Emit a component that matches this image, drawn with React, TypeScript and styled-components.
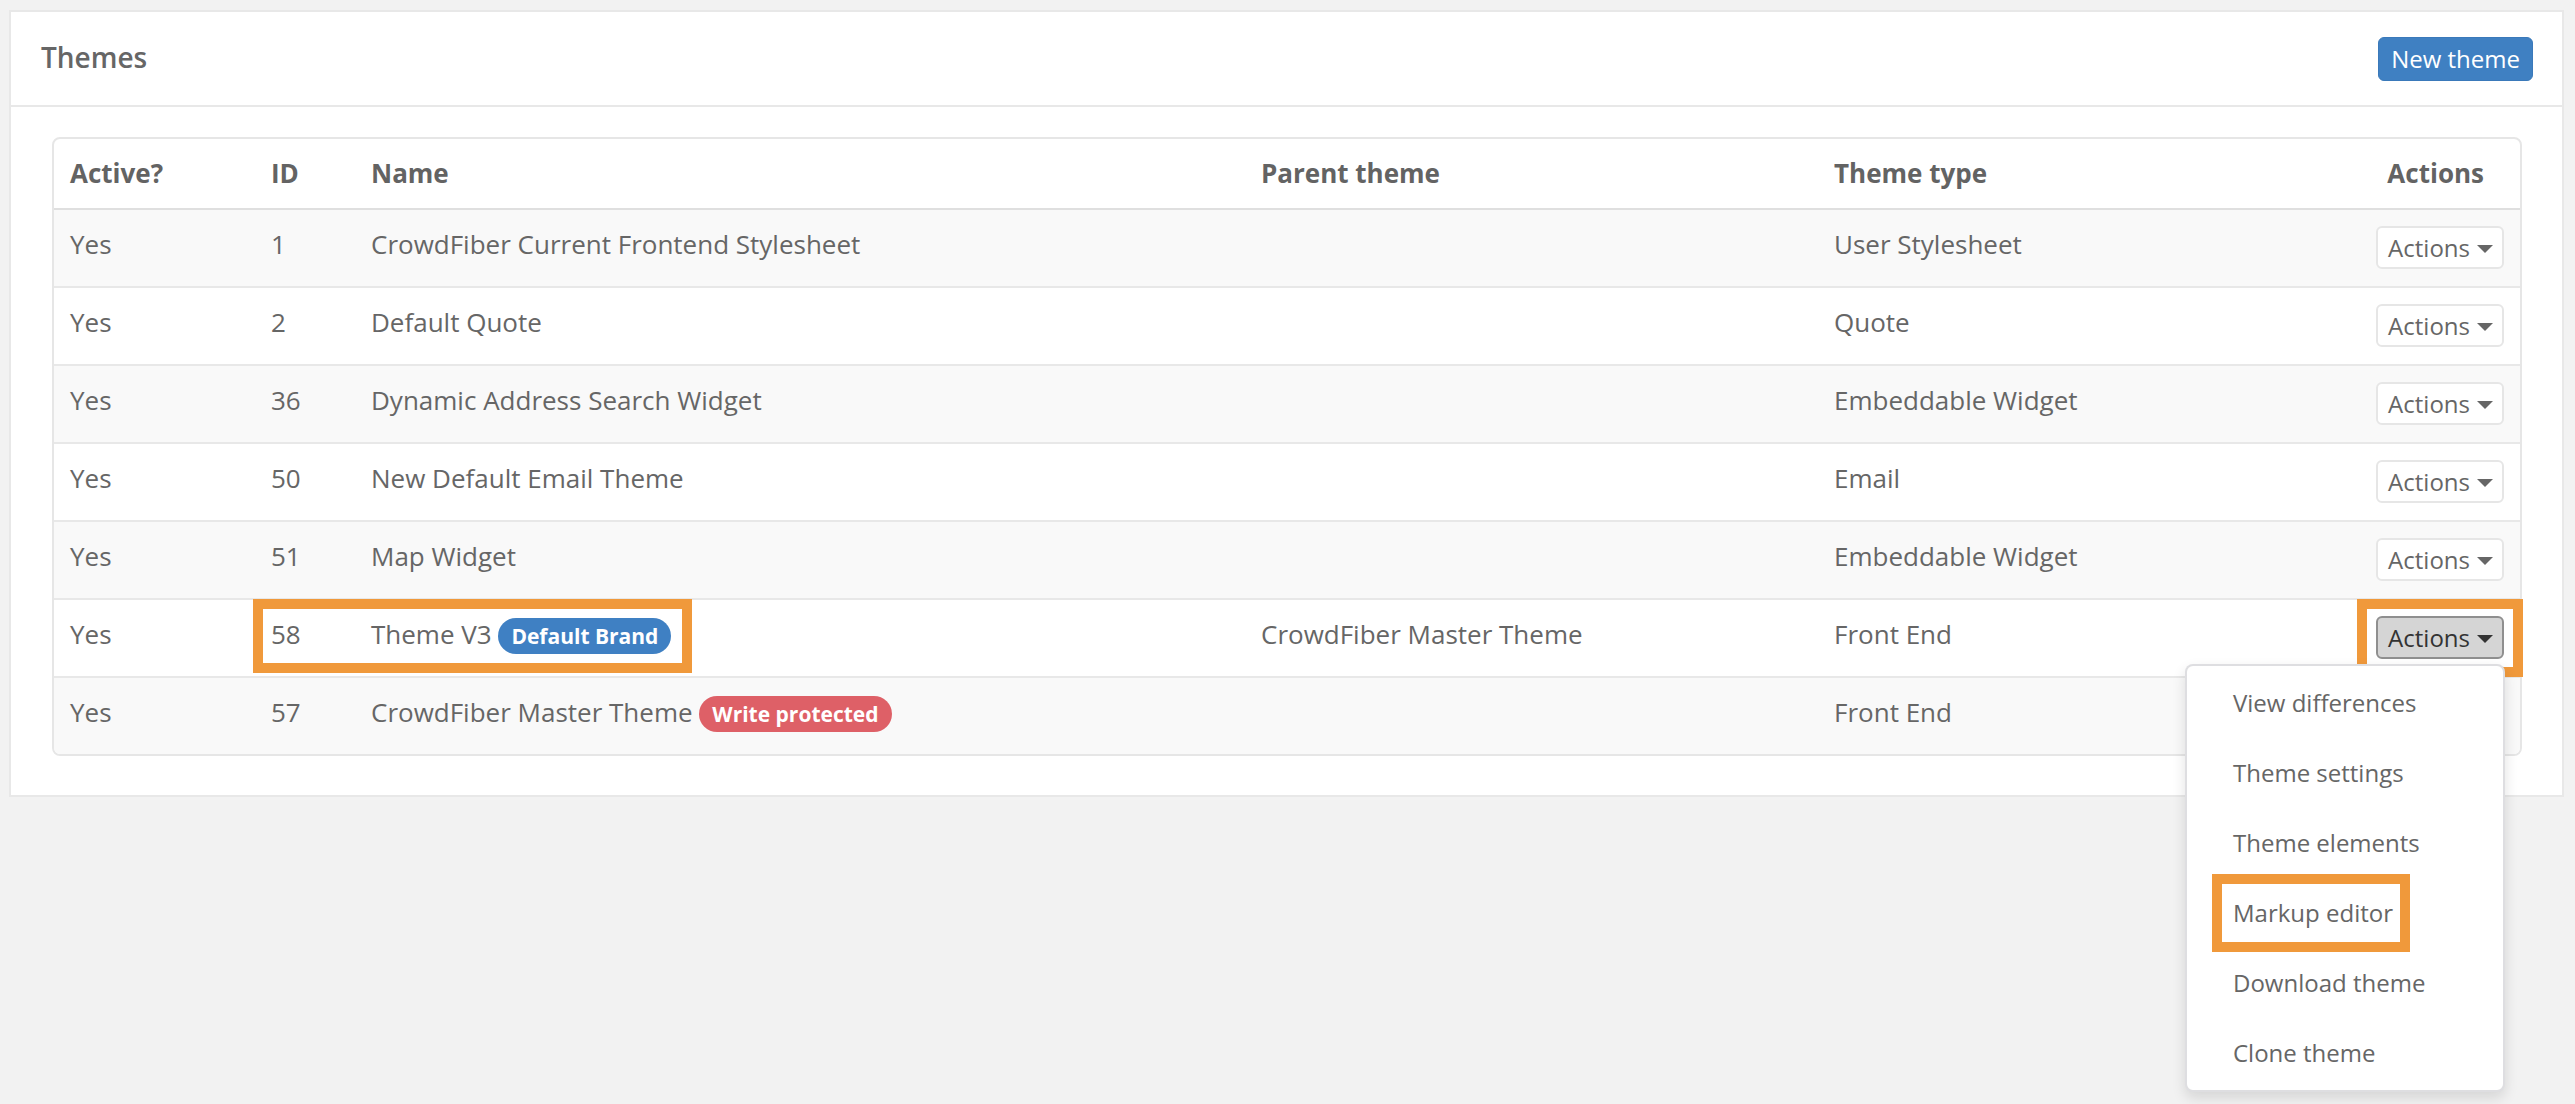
import React from 'react';
import styled, { createGlobalStyle } from 'styled-components';

const GlobalStyle = createGlobalStyle`
  html, body {
    margin: 0;
    padding: 0;
    background: #f2f2f2;
  }
  body {
    font-family: "Open Sans", "Liberation Sans", Arial, sans-serif;
    color: #666;
    min-height: 1104px;
  }
`;

const Page = styled.div`
  padding: 10px 11px 0 9px;
`;

const Panel = styled.section`
  background: #fff;
  border: 2px solid #e8e8e8;
`;

const PanelHeader = styled.header`
  height: 93px;
  display: flex;
  align-items: center;
  justify-content: space-between;
  padding: 0 29px 0 30px;
  border-bottom: 2px solid #e8e8e8;
`;

const Title = styled.h2`
  margin: -3px 0 0;
  font-size: 28px;
  font-weight: 600;
  color: #666;
`;

const PrimaryButton = styled.button`
  height: 44px;
  padding: 0 12px;
  border: 1px solid #3a79ba;
  border-radius: 6px;
  background: #3f80c2;
  color: #fff;
  font-family: inherit;
  font-size: 24px;
  line-height: 1;
  cursor: pointer;
`;

const PanelBody = styled.div`
  padding: 30px 40px 39px 41px;
`;

const TableCard = styled.div`
  border: 2px solid #e6e6e6;
  border-radius: 8px;
`;

const Table = styled.table`
  width: 100%;
  table-layout: fixed;
  border-collapse: separate;
  border-spacing: 0;
  font-size: 26px;
  line-height: 37px;

  tbody tr:first-child td {
    border-top: 0;
  }
  tbody tr:last-child td:first-child {
    border-bottom-left-radius: 6px;
  }
  tbody tr:last-child td:last-child {
    border-bottom-right-radius: 6px;
  }
`;

const Th = styled.th<{ $right?: boolean }>`
  padding: 16px ${(p) => (p.$right ? '36px' : '16px')} 16px 16px;
  text-align: ${(p) => (p.$right ? 'right' : 'left')};
  font-weight: 700;
  color: #636363;
  vertical-align: top;
  border-bottom: 2px solid #dfdfdf;
  white-space: nowrap;
`;

const Row = styled.tr<{ $striped: boolean }>`
  background: ${(p) => (p.$striped ? '#f9f9f9' : '#fff')};
`;

const Td = styled.td<{ $right?: boolean }>`
  position: relative;
  padding: 16px 16px 17px;
  border-top: 2px solid #e8e8e8;
  vertical-align: top;
  color: #666;
  white-space: nowrap;
  text-align: ${(p) => (p.$right ? 'right' : 'left')};
`;

const Badge = styled.span<{ $tone: 'primary' | 'danger' }>`
  display: inline-block;
  height: 36px;
  padding: 0 13px;
  border-radius: 18px;
  background: ${(p) => (p.$tone === 'primary' ? '#3f80c3' : '#de6067')};
  color: #fff;
  font-size: 21px;
  font-weight: 700;
  line-height: 36px;
  vertical-align: baseline;
`;

const ActionWrap = styled.span`
  position: relative;
  display: inline-block;
  vertical-align: top;
`;

const ActionsButton = styled.button<{ $open?: boolean }>`
  display: inline-flex;
  align-items: center;
  gap: 7px;
  height: 43px;
  padding: 0 9px 0 10px;
  border: 2px solid ${(p) => (p.$open ? '#8f8f8f' : '#e6e6e6')};
  border-radius: 6px;
  background: ${(p) => (p.$open ? '#d5d5d5' : '#fff')};
  color: ${(p) => (p.$open ? '#333' : '#666')};
  font-family: inherit;
  font-size: 24px;
  line-height: 1;
  vertical-align: top;
  cursor: pointer;
`;

const Caret = styled.span`
  display: inline-block;
  width: 0;
  height: 0;
  border-top: 8px solid currentColor;
  border-left: 8px solid transparent;
  border-right: 8px solid transparent;
  margin-top: 2px;
`;

const Menu = styled.ul`
  position: absolute;
  top: calc(100% + 5px);
  right: -1px;
  z-index: 10;
  width: 320px;
  box-sizing: border-box;
  margin: 0;
  padding: 2px 0;
  list-style: none;
  background: #fff;
  border: 2px solid rgba(0, 0, 20, 0.13);
  border-radius: 8px;
  box-shadow: 0 6px 14px rgba(0, 0, 0, 0.12);
  text-align: left;
`;

const MenuItem = styled.li`
  position: relative;
  height: 70px;
  padding-left: 46px;
  font-size: 24px;
  line-height: 70px;
  color: #666;
  white-space: nowrap;
`;

const Highlight = styled.span`
  position: absolute;
  box-sizing: border-box;
  border: 10px solid #f0993b;
  pointer-events: none;
  z-index: 5;
`;

const NameHighlight = styled(Highlight)`
  left: -2px;
  top: -1px;
  width: 439px;
  height: 74px;
`;

const ButtonHighlight = styled(Highlight)`
  left: -19px;
  right: -19px;
  top: -17px;
  bottom: -18px;
`;

const ItemHighlight = styled(Highlight)`
  left: 25px;
  top: -4px;
  width: 198px;
  height: 78px;
`;

type Theme = {
  id: number;
  name: string;
  badge?: { text: string; tone: 'primary' | 'danger' };
  parent: string;
  type: string;
  open?: boolean;
};

const themes: Theme[] = [
  { id: 1, name: 'CrowdFiber Current Frontend Stylesheet', parent: '', type: 'User Stylesheet' },
  { id: 2, name: 'Default Quote', parent: '', type: 'Quote' },
  { id: 36, name: 'Dynamic Address Search Widget', parent: '', type: 'Embeddable Widget' },
  { id: 50, name: 'New Default Email Theme', parent: '', type: 'Email' },
  { id: 51, name: 'Map Widget', parent: '', type: 'Embeddable Widget' },
  {
    id: 58,
    name: 'Theme V3',
    badge: { text: 'Default Brand', tone: 'primary' },
    parent: 'CrowdFiber Master Theme',
    type: 'Front End',
    open: true,
  },
  {
    id: 57,
    name: 'CrowdFiber Master Theme',
    badge: { text: 'Write protected', tone: 'danger' },
    parent: '',
    type: 'Front End',
  },
];

const menuItems = [
  'View differences',
  'Theme settings',
  'Theme elements',
  'Markup editor',
  'Download theme',
  'Clone theme',
];

export default function App() {
  return (
    <>
      <GlobalStyle />
      <Page>
        <Panel>
          <PanelHeader>
            <Title>Themes</Title>
            <PrimaryButton>New theme</PrimaryButton>
          </PanelHeader>
          <PanelBody>
            <TableCard>
              <Table>
                <colgroup>
                  <col style={{ width: 201 }} />
                  <col style={{ width: 100 }} />
                  <col style={{ width: 890 }} />
                  <col style={{ width: 573 }} />
                  <col style={{ width: 500 }} />
                  <col />
                </colgroup>
                <thead>
                  <tr>
                    <Th>Active?</Th>
                    <Th>ID</Th>
                    <Th>Name</Th>
                    <Th>Parent theme</Th>
                    <Th>Theme type</Th>
                    <Th $right>Actions</Th>
                  </tr>
                </thead>
                <tbody>
                  {themes.map((t, i) => (
                    <Row key={t.id} $striped={i % 2 === 0}>
                      <Td>Yes</Td>
                      <Td>
                        {t.open && <NameHighlight />}
                        {t.id}
                      </Td>
                      <Td>
                        {t.name}
                        {t.badge && (
                          <>
                            {' '}
                            <Badge $tone={t.badge.tone}>{t.badge.text}</Badge>
                          </>
                        )}
                      </Td>
                      <Td>{t.parent}</Td>
                      <Td>{t.type}</Td>
                      <Td $right>
                        <ActionWrap>
                          {t.open && <ButtonHighlight />}
                          <ActionsButton $open={t.open}>
                            Actions <Caret />
                          </ActionsButton>
                          {t.open && (
                            <Menu>
                              {menuItems.map((m) => (
                                <MenuItem key={m}>
                                  {m === 'Markup editor' && <ItemHighlight />}
                                  {m}
                                </MenuItem>
                              ))}
                            </Menu>
                          )}
                        </ActionWrap>
                      </Td>
                    </Row>
                  ))}
                </tbody>
              </Table>
            </TableCard>
          </PanelBody>
        </Panel>
      </Page>
    </>
  );
}
